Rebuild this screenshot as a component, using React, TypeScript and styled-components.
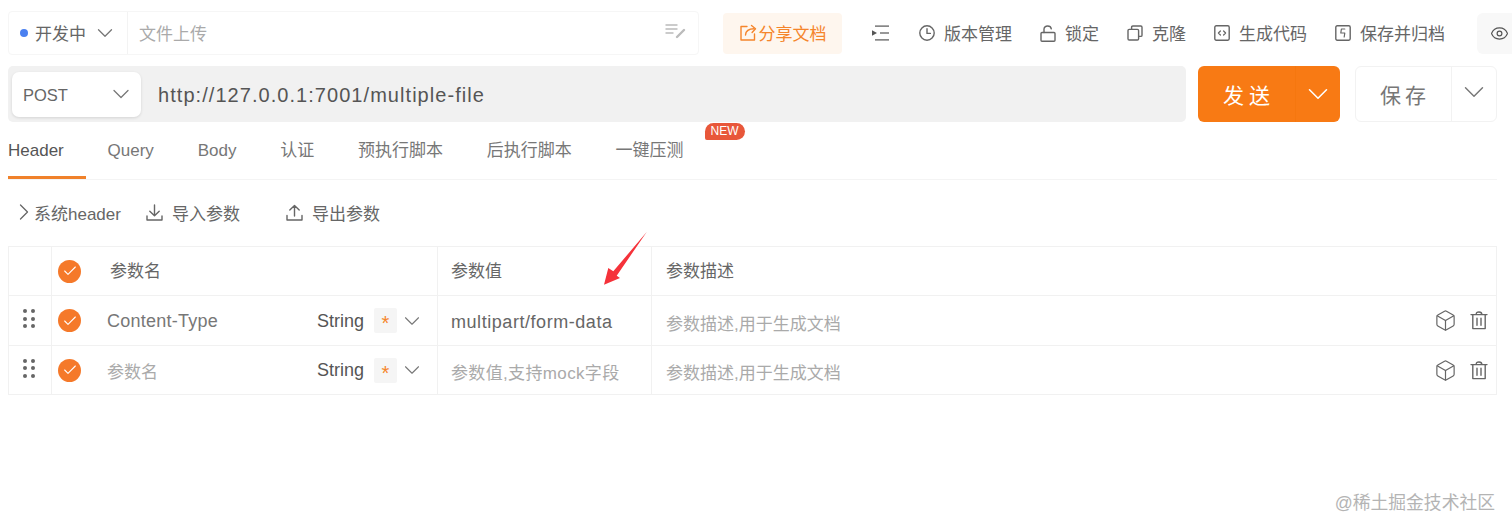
import styled, { createGlobalStyle } from "styled-components";
import { ChevronDown, ChevronRight, Check, Eye, Box } from "lucide-react";

const GlobalStyle = createGlobalStyle`
  body {
    margin: 0;
    background: #fff;
    font-family: "Liberation Sans", "Noto Sans CJK SC", sans-serif;
    color: #666;
  }
`;

const Page = styled.div`
  width: 1512px;
  height: 530px;
  padding: 11px 0 0 8px;
  box-sizing: border-box;
  overflow: hidden;
`;

const TopBar = styled.div`
  display: flex;
  align-items: center;
  height: 44px;
`;

const Label = styled.span`
  margin-top: -2px;
  white-space: nowrap;
`;

const StatusGroup = styled.div`
  display: flex;
  align-items: center;
  width: 691px;
  height: 44px;
  flex: none;
  box-sizing: border-box;
  border: 1px solid #f6f6f6;
  border-radius: 4px;
`;

const StatusSelect = styled.div`
  display: flex;
  align-items: center;
  width: 119px;
  height: 100%;
  flex: none;
  box-sizing: border-box;
  padding-left: 11px;
  border-right: 1px solid #f3f3f3;
  font-size: 17px;
  color: #666;
  svg {
    margin-left: 6px;
    color: #777;
  }
`;

const Dot = styled.span`
  width: 8px;
  height: 8px;
  border-radius: 50%;
  background: #4a80f0;
  margin-right: 7px;
`;

const NameInput = styled.div`
  display: flex;
  align-items: center;
  justify-content: space-between;
  flex: 1;
  padding: 0 12px 0 11px;
  font-size: 17px;
  color: #aaa;
`;

const ShareButton = styled.div`
  display: flex;
  align-items: center;
  justify-content: center;
  gap: 2px;
  width: 119px;
  height: 41px;
  flex: none;
  margin-left: 24px;
  border-radius: 4px;
  background: #fef6ee;
  color: #f5852b;
  font-size: 17px;
`;

const Toolbar = styled.div`
  display: flex;
  align-items: center;
  gap: 28px;
  margin-left: 30px;
  flex: none;
  > svg {
    margin-right: 2px;
  }
`;

const ToolItem = styled.div`
  display: flex;
  align-items: center;
  gap: 9px;
  font-size: 17px;
  color: #666;
`;

const EyeBox = styled.div`
  display: flex;
  align-items: center;
  width: 60px;
  height: 41px;
  flex: none;
  margin-left: 32px;
  padding-left: 13px;
  box-sizing: border-box;
  border-radius: 6px;
  background: #f8f8f8;
  color: #555;
`;

const UrlRow = styled.div`
  display: flex;
  margin-top: 11px;
  height: 56px;
`;

const UrlBar = styled.div`
  display: flex;
  align-items: center;
  width: 1178px;
  flex: none;
  padding-left: 4px;
  box-sizing: border-box;
  border-radius: 5px;
  background: #f1f1f1;
`;

const MethodSelect = styled.div`
  display: flex;
  align-items: center;
  justify-content: space-between;
  width: 129px;
  height: 45px;
  padding: 0 6px 0 11px;
  box-sizing: border-box;
  border-radius: 7px;
  background: #fff;
  box-shadow: 0 1px 3px rgba(0, 0, 0, 0.12);
  font-size: 16.5px;
  color: #666;
  svg {
    color: #777;
  }
`;

const MethodLabel = styled.span`
  padding-top: 2px;
`;

const UrlText = styled.div`
  margin-left: 17px;
  padding-top: 2px;
  font-size: 20px;
  letter-spacing: 1.05px;
  color: #555;
`;

const SendButton = styled.div`
  display: flex;
  width: 142px;
  flex: none;
  margin-left: 12px;
  border-radius: 6px;
  background: #f87a14;
  color: #fff;
`;

const SendLabel = styled.div`
  display: flex;
  align-items: center;
  width: 98px;
  padding-left: 25px;
  box-sizing: border-box;
  font-size: 21px;
  letter-spacing: 5px;
  border-right: 1px solid #f5770f;
`;

const SendArrow = styled.div`
  display: flex;
  align-items: center;
  justify-content: center;
  flex: 1;
`;

const SaveButton = styled.div`
  display: flex;
  width: 142px;
  flex: none;
  margin-left: 15px;
  box-sizing: border-box;
  border: 1px solid #f2f2f2;
  border-radius: 6px;
  color: #777;
`;

const SaveLabel = styled.div`
  display: flex;
  align-items: center;
  width: 96px;
  padding-left: 24px;
  box-sizing: border-box;
  font-size: 21px;
  letter-spacing: 4px;
  border-right: 1px solid #f2f2f2;
`;

const SaveArrow = styled.div`
  display: flex;
  justify-content: center;
  padding-top: 8px;
  flex: 1;
`;

const TabBar = styled.div`
  display: flex;
  gap: 21.8px;
  width: 1489px;
  height: 58px;
  box-sizing: border-box;
  border-bottom: 1px solid #f4f4f4;
`;

const Tab = styled.div<{ $active?: boolean }>`
  position: relative;
  height: 57px;
  box-sizing: border-box;
  padding: 17px 22px 0 0;
  line-height: 24px;
  font-size: 17px;
  white-space: nowrap;
  color: ${(p) => (p.$active ? "#555" : "#777")};
  border-bottom: 3px solid ${(p) => (p.$active ? "#f0812a" : "transparent")};
`;

const NewBadge = styled.span`
  position: absolute;
  top: 1px;
  left: 89px;
  width: 40px;
  height: 17px;
  border-radius: 9px 9px 9px 2px;
  background: #e8573a;
  color: #fff;
  font-size: 12px;
  line-height: 17px;
  text-align: center;
`;

const ParamBar = styled.div`
  display: flex;
  align-items: center;
  height: 66px;
  box-sizing: border-box;
  padding: 0 0 2px 1.5px;
  font-size: 17px;
  color: #666;
`;

const ParamAction = styled.div<{ $gap: number; $left: number }>`
  display: flex;
  align-items: center;
  gap: ${(p) => p.$gap}px;
  margin-left: ${(p) => p.$left}px;
  white-space: nowrap;
`;

const SysChevron = styled(ChevronRight)`
  margin-right: -3.5px;
`;

const TableWrap = styled.div`
  position: relative;
  width: 1489px;
  box-sizing: border-box;
  border: 1px solid #f1f1f1;
  border-bottom: 0;
`;

const Row = styled.div<{ $height: number }>`
  display: grid;
  grid-template-columns: 42px 386px 214px 1fr;
  height: ${(p) => p.$height}px;
  box-sizing: border-box;
  border-bottom: 1px solid #f1f1f1;
`;

const Cell = styled.div<{ $pad?: number; $first?: boolean }>`
  display: flex;
  align-items: center;
  box-sizing: border-box;
  padding-left: ${(p) => p.$pad ?? 14}px;
  border-left: ${(p) => (p.$first ? "0" : "1px solid #f1f1f1")};
  font-size: 17px;
  color: #666;
  white-space: nowrap;
  > svg {
    color: #777;
  }
`;

const Grip = styled.div`
  display: grid;
  grid-template-columns: 4px 4px;
  gap: 3.5px 4px;
  margin-top: -4px;
  margin-left: -1px;
  span {
    width: 4px;
    height: 4px;
    border-radius: 50%;
    background: #666;
  }
`;

const CheckCircle = styled.span`
  display: flex;
  align-items: center;
  justify-content: center;
  width: 23px;
  height: 23px;
  flex: none;
  border-radius: 50%;
  background: #f5792a;
  color: #fff;
`;

const NameText = styled.span<{ $muted?: boolean; $left: number }>`
  margin-left: ${(p) => p.$left}px;
  width: 210px;
  padding-top: ${(p) => (p.$muted ? "0" : "1px")};
  font-size: ${(p) => (p.$muted ? "17px" : "18px")};
  letter-spacing: ${(p) => (p.$muted ? "0" : "0.25px")};
  color: ${(p) => (p.$muted ? "#aaa" : "#777")};
`;

const HeadLabel = styled.span<{ $left?: number }>`
  margin: 0 0 3px ${(p) => p.$left ?? 0}px;
  color: #666;
`;

const ValueText = styled.span<{ $muted?: boolean }>`
  padding-top: 3px;
  font-size: ${(p) => (p.$muted ? "17px" : "18px")};
  letter-spacing: ${(p) => (p.$muted ? "0.35px" : "0.55px")};
  color: ${(p) => (p.$muted ? "#aaa" : "#666")};
`;

const DescText = styled.span`
  padding-top: 3px;
  color: #aaa;
`;

const TypeText = styled.span`
  color: #555;
  width: 57px;
  font-size: 18px;
  padding-top: 1px;
`;

const StarBox = styled.span`
  display: flex;
  justify-content: center;
  width: 23px;
  height: 25px;
  flex: none;
  border-radius: 2px;
  background: #f5f5f5;
  color: #f5852b;
  font-size: 20px;
  line-height: 31px;
  margin-right: 1.5px;
`;

const RowIcons = styled.div`
  display: flex;
  align-items: center;
  gap: 13px;
  margin-left: auto;
  margin-right: 8px;
  color: #666;
`;

const ArrowMark = styled.svg`
  position: absolute;
  left: 588px;
  top: -20px;
  width: 60px;
  height: 60px;
`;

const Watermark = styled.div`
  margin-top: 96px;
  padding-right: 17px;
  line-height: 24px;
  font-size: 17.8px;
  color: #b4b4b4;
  text-align: right;
`;

const Stroke = styled.svg`
  fill: none;
  stroke: currentColor;
  stroke-width: 1.4;
  stroke-linecap: round;
  stroke-linejoin: round;
  flex: none;
`;

function Chevron({ size = 14, width = 1.5 }: { size?: number; width?: number }) {
  return <ChevronDown size={size} strokeWidth={width} />;
}

function EditListIcon() {
  return (
    <Stroke width="21" height="16" viewBox="0 0 21 16" style={{ color: "#bbb", marginTop: -4 }}>
      <path d="M1 2h11M1 6h11M1 10h7" />
      <path d="M12 14l7-7" strokeWidth="2.4" />
    </Stroke>
  );
}

function ShareIcon() {
  return (
    <Stroke width="18" height="18" viewBox="0 0 18 18">
      <path d="M8 2.5H2v13.5h13.5v-6" />
      <path d="M6.5 11c.3-4 2.8-6.2 8.5-6.2" />
      <path d="M12.5 1.5l4 3.2-3.4 3.8" />
    </Stroke>
  );
}

function RunListIcon() {
  return (
    <svg width="17" height="16" viewBox="0 0 17 16" fill="#555" style={{ flex: "none" }}>
      <rect x="3" y="0.5" width="14" height="1.2" />
      <rect x="8" y="7.4" width="9" height="1.2" />
      <rect x="3" y="14.3" width="14" height="1.2" />
      <path d="M0 5.2L5 8 0 10.8z" />
    </svg>
  );
}

function ClockIcon() {
  return (
    <Stroke width="16" height="16" viewBox="0 0 16 16">
      <circle cx="8" cy="8" r="7.2" />
      <path d="M8 3.8V8.4h3.4" />
    </Stroke>
  );
}

function LockIcon() {
  return (
    <Stroke width="16" height="17" viewBox="0 0 16 17">
      <rect x="1" y="7.5" width="14" height="8.8" rx="1" />
      <path d="M4 7.5V4.2C4 2.2 5.6 1 7.6 1s3.4 1 3.7 2.8" />
    </Stroke>
  );
}

function CloneIcon() {
  return (
    <Stroke width="16" height="16" viewBox="0 0 16 16">
      <rect x="1" y="4.4" width="10.6" height="10.6" rx="1.2" />
      <path d="M4.6 4.2V2.2c0-.7.5-1.2 1.2-1.2h8c.7 0 1.2.5 1.2 1.2v8c0 .7-.5 1.2-1.2 1.2h-2" />
    </Stroke>
  );
}

function CodeIcon() {
  return (
    <Stroke width="16" height="16" viewBox="0 0 16 16">
      <rect x="0.8" y="0.8" width="14.4" height="14.4" rx="1.4" />
      <path d="M6.4 6L4.4 8l2 2M9.6 6l2 2-2 2" strokeWidth="1.2" />
    </Stroke>
  );
}

function ArchiveIcon() {
  return (
    <Stroke width="16" height="16" viewBox="0 0 16 16">
      <rect x="0.8" y="0.8" width="14.4" height="14.4" rx="1.4" />
      <path d="M9.8 4H6.4L5.8 8h4l-.6 4" strokeWidth="1.2" />
    </Stroke>
  );
}

function ImportIcon() {
  return (
    <Stroke width="17" height="17" viewBox="0 0 17 17">
      <path d="M8.5 1v10.5M3.8 7.2l4.7 4.6 4.7-4.6" />
      <path d="M1 12v4h15v-4" />
    </Stroke>
  );
}

function ExportIcon() {
  return (
    <Stroke width="17" height="17" viewBox="0 0 17 17">
      <path d="M8.5 12V1.5M3.8 6l4.7-4.6L13.2 6" />
      <path d="M1 11.5V16h15v-4.5" />
    </Stroke>
  );
}

function TrashIcon() {
  return (
    <Stroke width="18" height="19" viewBox="0 0 18 19">
      <path d="M1 3.6h16M6.2 3.2c0-1.6.8-2.2 2.8-2.2s2.8.6 2.8 2.2" />
      <path d="M2.8 3.8V17.6h12.4V3.8" />
      <path d="M7 7.2v7M11 7.2v7" />
    </Stroke>
  );
}

const tools = [
  { label: "版本管理", icon: <ClockIcon /> },
  { label: "锁定", icon: <LockIcon /> },
  { label: "克隆", icon: <CloneIcon /> },
  { label: "生成代码", icon: <CodeIcon /> },
  { label: "保存并归档", icon: <ArchiveIcon /> },
];

const tabs = ["Query", "Body", "认证", "预执行脚本", "后执行脚本"];

const params = [
  { name: "Content-Type", value: "multipart/form-data", height: 50, filled: true },
  { name: "参数名", value: "参数值,支持mock字段", height: 49, filled: false },
];

export default function App() {
  return (
    <Page>
      <GlobalStyle />
      <TopBar>
        <StatusGroup>
          <StatusSelect>
            <Dot />
            <Label>开发中</Label>
            <Chevron size={26} width={1.2} />
          </StatusSelect>
          <NameInput>
            <Label>文件上传</Label>
            <EditListIcon />
          </NameInput>
        </StatusGroup>
        <ShareButton>
          <ShareIcon />
          <Label>分享文档</Label>
        </ShareButton>
        <Toolbar>
          <RunListIcon />
          {tools.map((t) => (
            <ToolItem key={t.label}>
              {t.icon}
              <Label>{t.label}</Label>
            </ToolItem>
          ))}
        </Toolbar>
        <EyeBox>
          <Eye size={19} strokeWidth={1.5} />
        </EyeBox>
      </TopBar>

      <UrlRow>
        <UrlBar>
          <MethodSelect>
            <MethodLabel>POST</MethodLabel>
            <Chevron size={28} width={1.1} />
          </MethodSelect>
          <UrlText>http://127.0.0.1:7001/multiple-file</UrlText>
        </UrlBar>
        <SendButton>
          <SendLabel>发送</SendLabel>
          <SendArrow>
            <Chevron size={34} width={1.1} />
          </SendArrow>
        </SendButton>
        <SaveButton>
          <SaveLabel>保存</SaveLabel>
          <SaveArrow>
            <Chevron size={34} width={1} />
          </SaveArrow>
        </SaveButton>
      </UrlRow>

      <TabBar>
        <Tab $active>Header</Tab>
        {tabs.map((t) => (
          <Tab key={t}>{t}</Tab>
        ))}
        <Tab>
          一键压测
          <NewBadge>NEW</NewBadge>
        </Tab>
      </TabBar>

      <ParamBar>
        <ParamAction $gap={0} $left={0}>
          <SysChevron size={28} strokeWidth={1.1} />
          系统header
        </ParamAction>
        <ParamAction $gap={9} $left={25}>
          <ImportIcon />
          导入参数
        </ParamAction>
        <ParamAction $gap={9} $left={46}>
          <ExportIcon />
          导出参数
        </ParamAction>
      </ParamBar>

      <TableWrap>
        <Row $height={49}>
          <Cell $first />
          <Cell $pad={6}>
            <CheckCircle>
              <Check size={16} strokeWidth={1.6} />
            </CheckCircle>
            <HeadLabel $left={29}>参数名</HeadLabel>
          </Cell>
          <Cell $pad={13}>
            <HeadLabel>参数值</HeadLabel>
          </Cell>
          <Cell>
            <HeadLabel>参数描述</HeadLabel>
          </Cell>
        </Row>
        {params.map((p) => (
          <Row key={p.name} $height={p.height}>
            <Cell $first $pad={15}>
              <Grip>
                <span /><span /><span /><span /><span /><span />
              </Grip>
            </Cell>
            <Cell $pad={6}>
              <CheckCircle>
                <Check size={16} strokeWidth={1.6} />
              </CheckCircle>
              <NameText $left={26} $muted={!p.filled}>
                {p.name}
              </NameText>
              <TypeText>String</TypeText>
              <StarBox>*</StarBox>
              <Chevron size={26} width={1} />
            </Cell>
            <Cell $pad={13}>
              <ValueText $muted={!p.filled}>{p.value}</ValueText>
            </Cell>
            <Cell>
              <DescText>参数描述,用于生成文档</DescText>
              <RowIcons>
                <Box size={23} strokeWidth={1.25} />
                <TrashIcon />
              </RowIcons>
            </Cell>
          </Row>
        ))}
        <ArrowMark viewBox="0 0 60 60">
          <path d="M49.7 5L16.3 44.3 11.3 41 7 57.7 23 51 19.7 48.7z" fill="#f5323a" />
        </ArrowMark>
      </TableWrap>

      <Watermark>@稀土掘金技术社区</Watermark>
    </Page>
  );
}
